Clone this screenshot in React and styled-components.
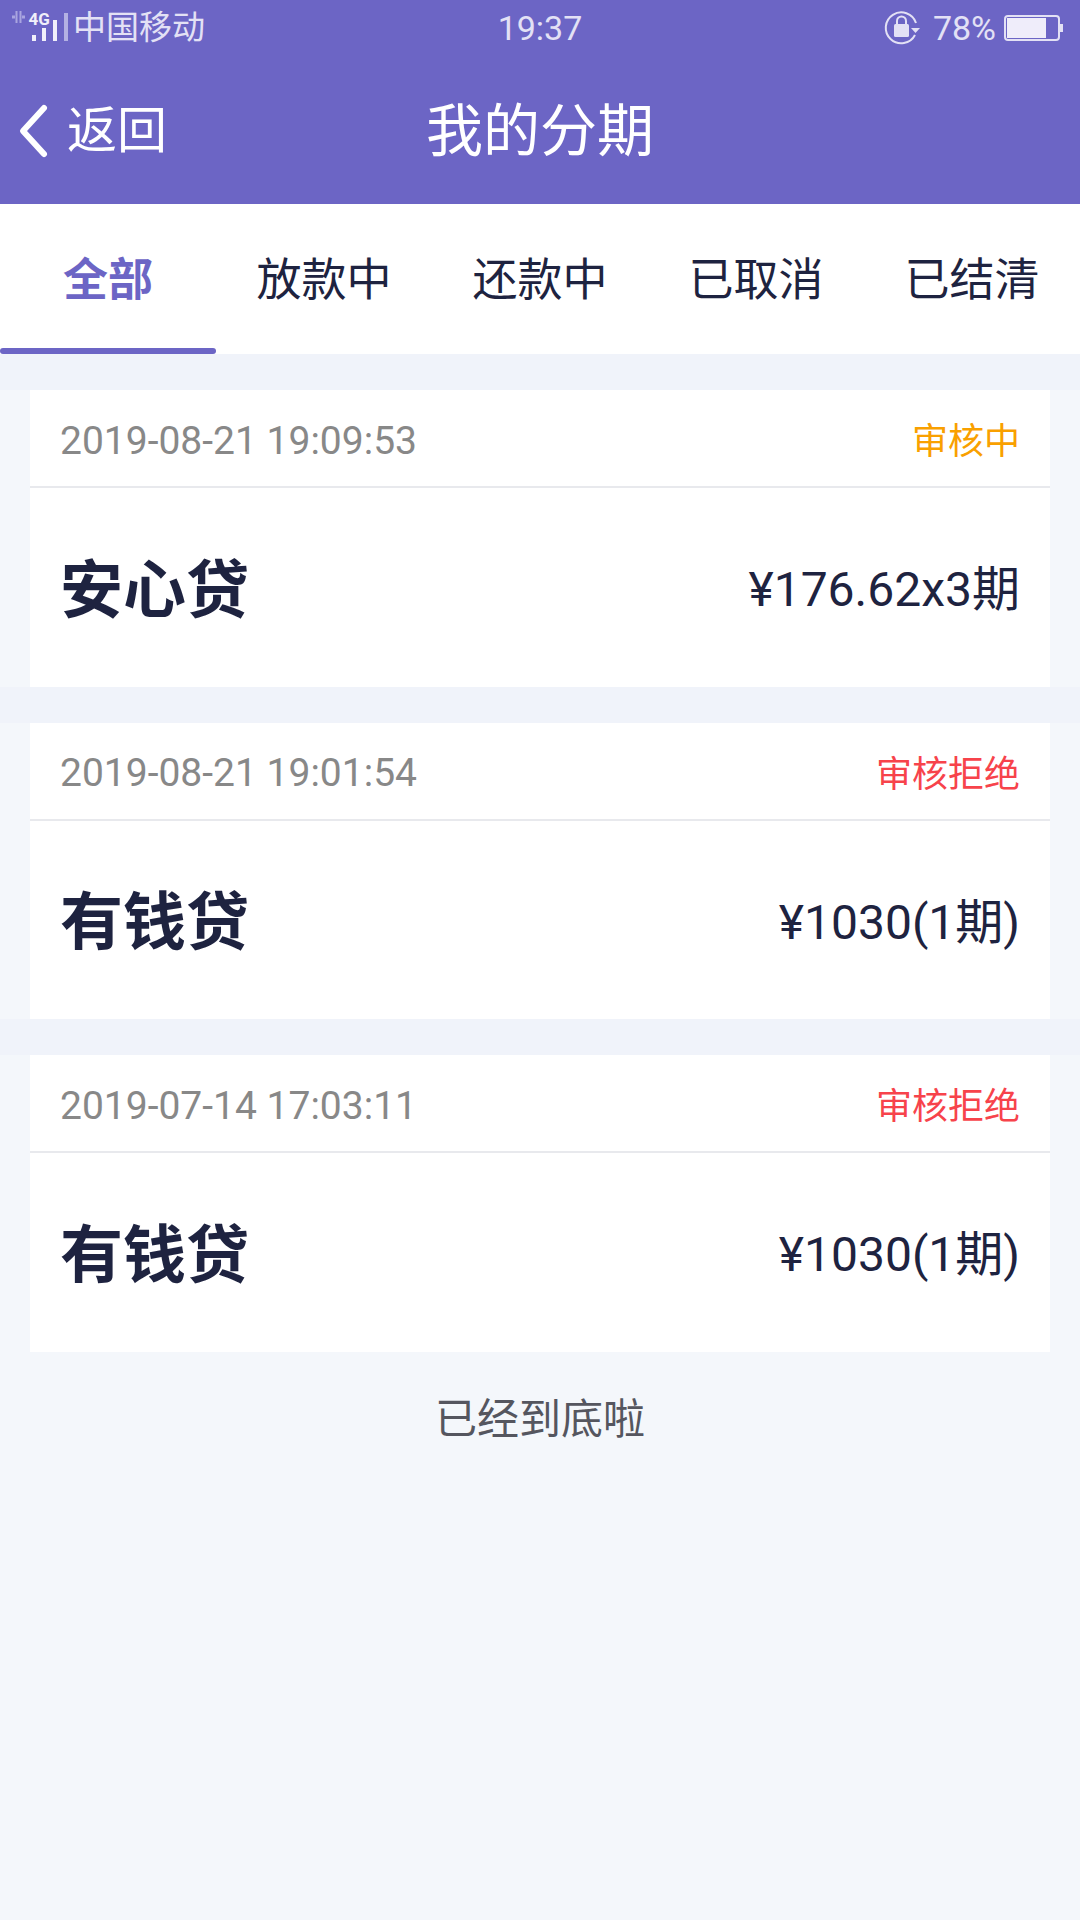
import React from 'react'
import styled, { createGlobalStyle } from 'styled-components'

const cjk = `Roboto, "Noto Sans CJK SC", sans-serif`

const GlobalStyle = createGlobalStyle`
	html, body {
		margin: 0;
		padding: 0;
	}
	body {
		background: #f4f7fb;
		font-family: ${cjk};
	}
`

const Page = styled.div`
	width: 1080px;
	height: 1920px;
	overflow: hidden;
	background: #f4f7fb;
`

const Header = styled.header`
	height: 204px;
	background: #6c65c5;
	color: #fff;
`

const StatusBar = styled.div`
	display: grid;
	grid-template-columns: 1fr auto 1fr;
	align-items: center;
	height: 56px;
	padding: 0 16px 0 0;
	color: #e3e1f5;
	font-size: 33px;
	line-height: 56px;
`

const StatusLeft = styled.div`
	display: flex;
	align-items: center;
`

const Carrier = styled.span`
	margin-left: 1px;
`

const Clock = styled.span`
	font-size: 34px;
	margin-left: 16px;
`

const StatusRight = styled.div`
	display: flex;
	align-items: center;
	justify-content: flex-end;
	font-size: 34px;
	gap: 12px;
`

const Percent = styled.span`
	margin-right: -4px;
`

const NavBar = styled.div`
	position: relative;
	display: flex;
	align-items: center;
	justify-content: center;
	height: 148px;
	padding-top: 4px;
	box-sizing: border-box;
`

const BackButton = styled.div`
	position: absolute;
	left: 16px;
	top: 40px;
	display: flex;
	align-items: center;
	gap: 17px;
	font-size: 50px;
	line-height: 70px;
`

const Title = styled.h1`
	margin: 0;
	font-size: 57px;
	font-weight: 400;
	line-height: 70px;
`

const Tabs = styled.nav`
	display: flex;
	height: 150px;
	background: #fff;
`

const Tab = styled.div`
	position: relative;
	flex: 1;
	display: flex;
	align-items: center;
	justify-content: center;
	padding-bottom: 6px;
	font-size: 45px;
	box-sizing: border-box;
	font-weight: ${({ $active }) => ($active ? 700 : 400)};
	color: ${({ $active }) => ($active ? '#6c65c5' : '#1e2340')};

	&::after {
		content: '';
		position: absolute;
		left: 0;
		right: 0;
		bottom: 0;
		height: 6px;
		border-radius: 3px;
		background: ${({ $active }) => ($active ? '#6c65c5' : 'transparent')};
	}
`

const Band = styled.div`
	height: 36px;
	background: #f0f3fa;
`

const Card = styled.section`
	margin: 0 30px;
	background: #fff;
`

const CardTop = styled.div`
	display: flex;
	align-items: center;
	justify-content: space-between;
	height: 96px;
	padding: 0 30px;
	border-bottom: 2px solid #e8e9ed;
`

const DateText = styled.span`
	padding-top: 5px;
	font-size: 39px;
	color: #888888;
`

const Status = styled.span`
	font-size: 36px;
	color: ${({ $tone }) => ($tone === 'pending' ? '#f9a000' : '#f7434b')};
`

const CardBody = styled.div`
	display: flex;
	align-items: center;
	justify-content: space-between;
	box-sizing: border-box;
	height: 198.5px;
	padding: 0 30px 6px;
	color: #1e2340;
`

const Product = styled.span`
	font-size: 63px;
	font-weight: 700;
`

const Amount = styled.span`
	padding-top: 2px;
	font-size: 48px;
`

const EndNote = styled.div`
	margin-top: 40px;
	text-align: center;
	font-size: 42px;
	line-height: 56px;
	color: #55565f;
`

const SignalIcon = () => (
	<svg width="72" height="56" viewBox="0 0 72 56">
		<path d="M15 17l-3 0M22 17l3 0" stroke="#a9a5e0" strokeWidth="3" fill="none" />
		<path d="M16.500 11v12M20.500 11v12" stroke="#a9a5e0" strokeWidth="2" fill="none" />
		<text x="28.500" y="24.500" fontSize="17" fontWeight="700" fontFamily="Roboto, sans-serif" fill="#f0effa">4G</text>
		<rect x="32" y="35" width="4" height="6" fill="#f0effa" />
		<rect x="42" y="28" width="4" height="13" fill="#f0effa" />
		<rect x="53" y="20" width="4" height="21" fill="#f0effa" />
		<rect x="64" y="13" width="4" height="28" fill="#b4b1e3" />
	</svg>
)

const LockIcon = () => (
	<svg width="38" height="38" viewBox="0 0 38 38" fill="none">
		<path d="M32 26a15.500 15.500 0 1 1 1-12" stroke="#e3e1f5" strokeWidth="2" />
		<rect x="11" y="15" width="15" height="13" rx="1.500" fill="#e3e1f5" />
		<path d="M14 15v-3a4.500 4.500 0 0 1 9 0v3" stroke="#e3e1f5" strokeWidth="2" />
		<path d="M28 19h9l-4.500 5z" fill="#e3e1f5" />
	</svg>
)

const BatteryIcon = () => (
	<svg width="60" height="26" viewBox="0 0 60 26">
		<rect x="1" y="1" width="54" height="24" rx="3" fill="none" stroke="#e3e1f5" strokeWidth="2" />
		<rect x="3" y="3" width="39" height="20" fill="#efedfa" />
		<rect x="56" y="9" width="3" height="8" fill="#e3e1f5" />
	</svg>
)

const BackIcon = () => (
	<svg width="34" height="56" viewBox="0 0 34 56" fill="none">
		<path d="M28 5L7 28l21 23" stroke="#fff" strokeWidth="6" strokeLinecap="round" strokeLinejoin="round" />
	</svg>
)

const tabs = ['全部', '放款中', '还款中', '已取消', '已结清']

const orders = [
	{ date: '2019-08-21 19:09:53', status: '审核中', tone: 'pending', name: '安心贷', amount: '¥176.62x3期' },
	{ date: '2019-08-21 19:01:54', status: '审核拒绝', tone: 'rejected', name: '有钱贷', amount: '¥1030(1期)' },
	{ date: '2019-07-14 17:03:11', status: '审核拒绝', tone: 'rejected', name: '有钱贷', amount: '¥1030(1期)' },
]

export default function App() {
	return (
		<>
			<GlobalStyle />
			<Page>
				<Header>
					<StatusBar>
						<StatusLeft>
							<SignalIcon />
							<Carrier>中国移动</Carrier>
						</StatusLeft>
						<Clock>19:37</Clock>
						<StatusRight>
							<LockIcon />
							<Percent>78%</Percent>
							<BatteryIcon />
						</StatusRight>
					</StatusBar>
					<NavBar>
						<BackButton>
							<BackIcon />
							<span>返回</span>
						</BackButton>
						<Title>我的分期</Title>
					</NavBar>
				</Header>

				<Tabs>
					{tabs.map((tab, index) => (
						<Tab key={tab} $active={index === 0}>{tab}</Tab>
					))}
				</Tabs>

				{orders.map((order) => (
					<React.Fragment key={order.date}>
						<Band />
						<Card>
							<CardTop>
								<DateText>{order.date}</DateText>
								<Status $tone={order.tone}>{order.status}</Status>
							</CardTop>
							<CardBody>
								<Product>{order.name}</Product>
								<Amount>{order.amount}</Amount>
							</CardBody>
						</Card>
					</React.Fragment>
				))}

				<EndNote>已经到底啦</EndNote>
			</Page>
		</>
	)
}
